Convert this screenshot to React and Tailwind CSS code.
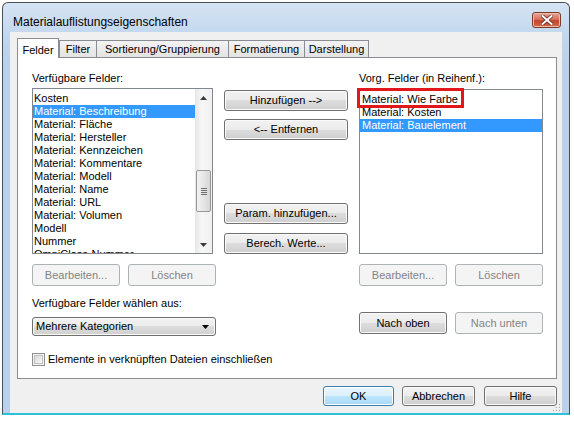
// App.jsx
const FONT = { fontFamily: '"Liberation Sans", Arial, sans-serif' }

const leftItems = [
  "Kosten",
  "Material: Beschreibung",
  "Material: Fläche",
  "Material: Hersteller",
  "Material: Kennzeichen",
  "Material: Kommentare",
  "Material: Modell",
  "Material: Name",
  "Material: URL",
  "Material: Volumen",
  "Modell",
  "Nummer",
  "OmniClass-Nummer",
]

const rightItems = ["Material: Wie Farbe", "Material: Kosten", "Material: Bauelement"]

function Btn({ children, className = "", disabled, isDefault }) {
  let look =
    "border-[#707070] bg-[linear-gradient(#f2f2f2_0%,#ebebeb_50%,#dddddd_50%,#cfcfcf_100%)] text-black shadow-[inset_0_0_0_1px_#fafafa]"
  if (disabled) look = "border-[#adb2b5] bg-[#f4f4f4] text-[#838383]"
  if (isDefault)
    look =
      "border-[#3c7fb1] bg-[linear-gradient(#eaf6fd_0%,#d9f0fc_50%,#bee6fd_50%,#a7d9f5_100%)] text-black shadow-[inset_0_0_0_1px_#ffffff]"
  return (
    <div className={`flex shrink-0 items-center justify-center rounded-[3px] border text-[11px] ${look} ${className}`}>
      {children}
    </div>
  )
}

function Tab({ label, active, className = "" }) {
  if (active)
    return (
      <div className={`relative z-10 -mb-px flex h-[20px] items-start justify-center border border-b-0 border-[#898c95] bg-white pt-[3px] text-[11px] ${className}`}>
        {label}
      </div>
    )
  return (
    <div className={`-ml-px flex h-[17px] items-center justify-center border border-b-0 border-[#898c95] bg-[linear-gradient(#f3f3f3,#e3e3e3)] text-[11px] ${className}`}>
      {label}
    </div>
  )
}

function ScrollBar() {
  return (
    <div className="flex w-[17px] flex-col bg-[linear-gradient(90deg,#e6e6e6,#f7f7f7_40%,#f0f0f0)]">
      <div className="flex h-[17px] items-center justify-center">
        <svg width="7" height="4" viewBox="0 0 7 4"><path d="M0 4 L3.5 0 L7 4 Z" fill="#3b3b3b" /></svg>
      </div>
      <div className="h-[64px]" />
      <div className="mx-px flex h-[42px] items-center justify-center rounded-[2px] border border-[#979797] bg-[linear-gradient(90deg,#f2f2f2,#e6e6e6_50%,#d6d6d6)]">
        <div className="flex flex-col gap-[1px]">
          <div className="h-px w-[6px] bg-[#6f6f6f]" />
          <div className="h-px w-[6px] bg-[#6f6f6f]" />
          <div className="h-px w-[6px] bg-[#6f6f6f]" />
          <div className="h-px w-[6px] bg-[#6f6f6f]" />
        </div>
      </div>
      <div className="flex-1" />
      <div className="flex h-[17px] items-center justify-center">
        <svg width="7" height="4" viewBox="0 0 7 4"><path d="M0 0 L3.5 4 L7 0 Z" fill="#3b3b3b" /></svg>
      </div>
    </div>
  )
}

export default function App() {
  return (
    <div className="h-[424px] w-[574px] bg-white pl-[2px] pt-[2px] text-black" style={FONT}>
      <div className="flex w-[568px] flex-col rounded-t-[6px] border border-b-2 border-[#4a4f57] border-b-[#2fc0d8] bg-[linear-gradient(#d6e4f3_0px,#c3d8ee_30px,#b9d1ea_60px)]">
        {/* title bar */}
        <div className="flex h-[29px] justify-between">
          <div className="pl-[10px] pt-[11px] text-[12px] leading-[16px]">Materialauflistungseigenschaften</div>
          <div className="mr-[8px] mt-[9px] flex h-[16px] w-[29px] items-center justify-center rounded-[3px] border border-[#7b3b2e] bg-[linear-gradient(#e8a492_0%,#d7735f_45%,#c4432a_55%,#d36a4c_100%)] shadow-[inset_0_0_0_1px_#f0b8a8]">
            <svg width="12" height="10" viewBox="0 0 12 10">
              <path d="M1.5 1 L10.5 9 M10.5 1 L1.5 9" stroke="#5a2a22" strokeWidth="3.6" strokeLinecap="square" />
              <path d="M1.5 1 L10.5 9 M10.5 1 L1.5 9" stroke="#ffffff" strokeWidth="2" strokeLinecap="square" />
            </svg>
          </div>
        </div>

        {/* client */}
        <div className="relative mx-[7px] h-[381px] bg-[#f0f0f0] pl-[7px] pt-[7px]">
          <div className="flex h-[18px] items-end">
            <Tab label="Felder" active className="w-[42px]" />
            <Tab label="Filter" className="ml-0 w-[38px]" />
            <Tab label="Sortierung/Gruppierung" className="w-[133px]" />
            <Tab label="Formatierung" className="w-[77px]" />
            <Tab label="Darstellung" className="w-[65px]" />
          </div>

          <div className="flex h-[322px] w-[540px] gap-[11px] border border-[#898c95] bg-white pl-[14px] pt-[14px] text-[11px]">
            {/* left column */}
            <div className="flex w-[181px] shrink-0 flex-col">
              <div className="h-[13px] leading-[13px]">Verfügbare Felder:</div>
              <div className="mt-[3px] flex h-[166px] w-[181px] overflow-hidden border border-[#828790] bg-white">
                <div className="flex-1 overflow-hidden pt-[3px]">
                  {leftItems.map((it, i) => (
                    <div
                      key={it}
                      className={`h-[13px] whitespace-nowrap pl-[1px] leading-[13px] ${i === 1 ? "bg-[#3399ff] text-white" : ""}`}
                    >
                      {it}
                    </div>
                  ))}
                </div>
                <ScrollBar />
              </div>
              <div className="mt-[10px] flex gap-[8px]">
                <Btn disabled className="h-[22px] w-[88px]">Bearbeiten...</Btn>
                <Btn disabled className="h-[22px] w-[88px]">Löschen</Btn>
              </div>
              <div className="mt-[11px] h-[13px] whitespace-nowrap leading-[13px]">Verfügbare Felder wählen aus:</div>
              <div className="mt-[7px] flex h-[19px] w-[184px] shrink-0 items-center justify-between rounded-[3px] border border-[#707070] bg-[linear-gradient(#f2f2f2_0%,#ebebeb_50%,#dddddd_50%,#cfcfcf_100%)] pl-[3px] pr-[6px] shadow-[inset_0_0_0_1px_#fafafa]">
                <span>Mehrere Kategorien</span>
                <svg width="7" height="4" viewBox="0 0 7 4"><path d="M0 0 L3.5 4 L7 0 Z" fill="#000" /></svg>
              </div>
              <div className="mt-[15px] flex items-center gap-[3px]">
                <div className="flex h-[13px] w-[13px] shrink-0 items-center justify-center border border-[#8e8f8f] bg-[#f4f4f4]">
                  <div className="h-[9px] w-[9px] border border-[#c0c0c0] bg-[linear-gradient(135deg,#d8d8d8,#f8f8f8)]" />
                </div>
                <span className="whitespace-nowrap">Elemente in verknüpften Dateien einschließen</span>
              </div>
            </div>

            {/* middle column */}
            <div className="flex w-[124px] shrink-0 flex-col">
              <Btn className="mt-[18px] h-[21px]">Hinzufügen --&gt;</Btn>
              <Btn className="mt-[8px] h-[21px]">&lt;-- Entfernen</Btn>
              <Btn className="mt-[63px] h-[21px]">Param. hinzufügen...</Btn>
              <Btn className="mt-[9px] h-[21px]">Berech. Werte...</Btn>
            </div>

            {/* right column */}
            <div className="flex w-[184px] shrink-0 flex-col">
              <div className="h-[13px] leading-[13px]">Vorg. Felder (in Reihenf.):</div>
              <div className="relative mt-[4px] h-[165px] w-[184px] border border-[#828790] bg-white pt-[3px]">
                {rightItems.map((it, i) => (
                  <div
                    key={it}
                    className={`h-[13px] whitespace-nowrap pl-[2px] leading-[13px] ${i === 2 ? "bg-[#3399ff] text-white" : ""}`}
                  >
                    {it}
                  </div>
                ))}
                <div className="absolute left-[-3px] top-[-2px] h-[20px] w-[107px] border-[3px] border-[#e2171c]" />
              </div>
              <div className="mt-[10px] flex gap-[8px]">
                <Btn disabled className="h-[22px] w-[88px]">Bearbeiten...</Btn>
                <Btn disabled className="h-[22px] w-[88px]">Löschen</Btn>
              </div>
              <div className="mt-[26px] flex gap-[8px]">
                <Btn className="h-[22px] w-[88px]">Nach oben</Btn>
                <Btn disabled className="h-[22px] w-[88px]">Nach unten</Btn>
              </div>
            </div>
          </div>

          <div className="mt-[7px] flex justify-end gap-[8px] pr-[5px]">
            <Btn isDefault className="h-[20px] w-[71px]">OK</Btn>
            <Btn className="h-[20px] w-[73px]">Abbrechen</Btn>
            <Btn className="ml-px h-[20px] w-[73px]">Hilfe</Btn>
          </div>

          <svg className="absolute bottom-[1px] right-[1px]" width="8" height="8" viewBox="0 0 8 8">
            <rect x="6" y="0" width="1" height="1" fill="#a0a0a0" />
            <rect x="3" y="3" width="1" height="1" fill="#a0a0a0" />
            <rect x="6" y="3" width="1" height="1" fill="#a0a0a0" />
            <rect x="0" y="6" width="1" height="1" fill="#a0a0a0" />
            <rect x="3" y="6" width="1" height="1" fill="#a0a0a0" />
            <rect x="6" y="6" width="1" height="1" fill="#a0a0a0" />
          </svg>
        </div>
      </div>
    </div>
  )
}
